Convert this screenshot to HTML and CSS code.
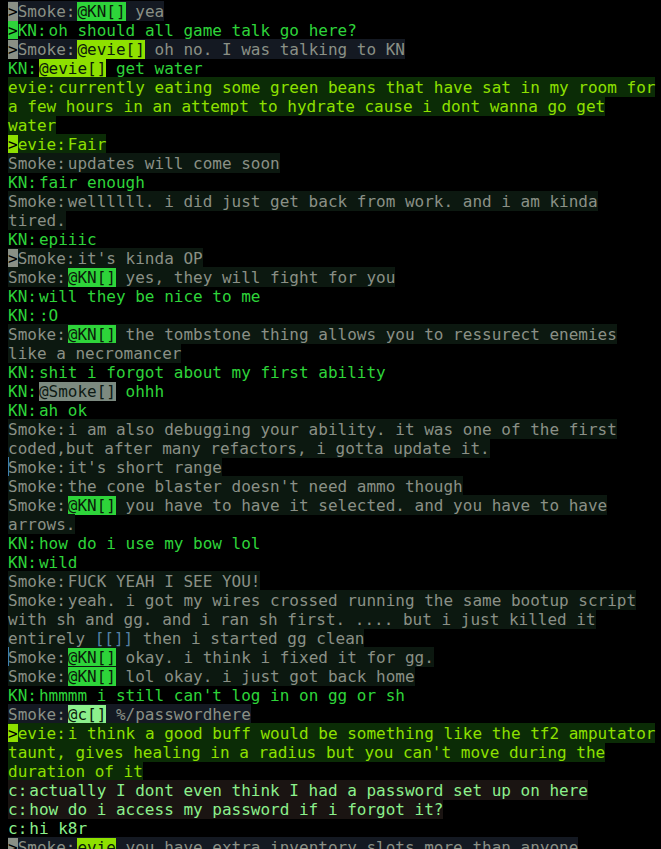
FILE: index.html
```html
<!DOCTYPE html>
<html>
<head>
<meta charset="utf-8">
<link rel="stylesheet" href="styles.css">
</head>
<body>
<div class="log">
  <div class="msg smoke self"><span class="b"><span class="p">&gt;</span><span class="n">Smoke:</span><span class="m kn">@KN[]</span> yea</span></div>
  <div class="msg kn self"><span class="b"><span class="p">&gt;</span><span class="n">KN:</span>oh should all game talk go here?</span></div>
  <div class="msg smoke self"><span class="b"><span class="p">&gt;</span><span class="n">Smoke:</span><span class="m ev">@evie[]</span> oh no. I was talking to KN</span></div>
  <div class="msg kn"><span class="b"><span class="n">KN:</span><span class="m ev">@evie[]</span> get water</span></div>
  <div class="msg evie"><span class="b"><span class="n">evie:</span>currently eating some green beans that have sat in my room for a few hours in an attempt to hydrate cause i dont wanna go get water</span></div>
  <div class="msg evie self"><span class="b"><span class="p">&gt;</span><span class="n">evie:</span>Fair</span></div>
  <div class="msg smoke"><span class="b"><span class="n">Smoke:</span>updates will come soon</span></div>
  <div class="msg kn"><span class="b"><span class="n">KN:</span>fair enough</span></div>
  <div class="msg smoke"><span class="b"><span class="n">Smoke:</span>wellllll. i did just get back from work. and i am kinda tired.</span></div>
  <div class="msg kn"><span class="b"><span class="n">KN:</span>epiiic</span></div>
  <div class="msg smoke"><span class="b"><span class="p">&gt;</span><span class="n">Smoke:</span>it's kinda OP</span></div>
  <div class="msg smoke"><span class="b"><span class="n">Smoke:</span><span class="m kn">@KN[]</span> yes, they will fight for you</span></div>
  <div class="msg kn"><span class="b"><span class="n">KN:</span>will they be nice to me</span></div>
  <div class="msg kn"><span class="b"><span class="n">KN:</span>:O</span></div>
  <div class="msg smoke"><span class="b"><span class="n">Smoke:</span><span class="m kn">@KN[]</span> the tombstone thing allows you to ressurect enemies like a necromancer</span></div>
  <div class="msg kn"><span class="b"><span class="n">KN:</span>shit i forgot about my first ability</span></div>
  <div class="msg kn"><span class="b"><span class="n">KN:</span><span class="m sm">@Smoke[]</span> ohhh</span></div>
  <div class="msg kn"><span class="b"><span class="n">KN:</span>ah ok</span></div>
  <div class="msg smoke"><span class="b"><span class="n">Smoke:</span>i am also debugging your ability. it was one of the first coded,but after many refactors, i gotta update it.</span></div>
  <div class="msg smoke"><span class="b mark"><span class="n">Smoke:</span>it's short range</span></div>
  <div class="msg smoke"><span class="b"><span class="n">Smoke:</span>the cone blaster doesn't need ammo though</span></div>
  <div class="msg smoke"><span class="b"><span class="n">Smoke:</span><span class="m kn">@KN[]</span> you have to have it selected. and you have to have arrows.</span></div>
  <div class="msg kn"><span class="b"><span class="n">KN:</span>how do i use my bow lol</span></div>
  <div class="msg kn"><span class="b"><span class="n">KN:</span>wild</span></div>
  <div class="msg smoke"><span class="b"><span class="n">Smoke:</span>FUCK YEAH I SEE YOU!</span></div>
  <div class="msg smoke"><span class="b"><span class="n">Smoke:</span>yeah. i got my wires crossed running the same bootup script with sh and gg. and i ran sh first. .... but i just killed it entirely <span class="code">[[]]</span> then i started gg clean</span></div>
  <div class="msg smoke"><span class="b mark"><span class="n">Smoke:</span><span class="m kn">@KN[]</span> okay. i think i fixed it for gg.</span></div>
  <div class="msg smoke"><span class="b"><span class="n">Smoke:</span><span class="m kn">@KN[]</span> lol okay. i just got back home</span></div>
  <div class="msg kn"><span class="b"><span class="n">KN:</span>hmmmm i still can't log in on gg or sh</span></div>
  <div class="msg smoke self"><span class="b"><span class="n">Smoke:</span><span class="m c">@c[]</span> %/passwordhere</span></div>
  <div class="msg evie"><span class="b"><span class="p">&gt;</span><span class="n">evie:</span>i think a good buff would be something like the tf2 amputator taunt, gives healing in a radius but you can't move during the duration of it</span></div>
  <div class="msg c"><span class="b"><span class="n">c:</span>actually I dont even think I had a password set up on here</span></div>
  <div class="msg c"><span class="b"><span class="n">c:</span>how do i access my password if i forgot it?</span></div>
  <div class="msg c plain"><span class="b"><span class="n">c:</span>hi k8r</span></div>
  <div class="msg smoke self"><span class="b"><span class="p">&gt;</span><span class="n">Smoke:</span><span class="m ev">evie</span> you have extra inventory slots more than anyone</span></div>
</div>
</body>
</html>
```
FILE: styles.css
```css
html, body {
  margin: 0;
  padding: 0;
  background: #000;
}
body {
  overflow: hidden;
  height: 849px;
}
.log {
  width: 650px;
  padding: 2px 0 0 8px;
  font-family: "DejaVu Sans Mono", "Liberation Mono", monospace;
  font-size: 16px;
  line-height: 19px;
}
.msg { white-space: normal; }
.b {
  padding: 1px 0 0;
}
.n { margin-right: 2px; }
.p { color: #000; }
.m { color: #0b1a0b; }
.m.kn { background: #2ed43a; }
.m.ev { background: #8ee000; }
.m.sm { background: #7c8a80; color: #0e1a14; }
.m.c { background: #8cf08c; }
.code { color: #5582a6; }
.mark { box-shadow: inset 1px 0 0 #3e7fb0; }

.smoke .b { color: #8a9086; background: #0c1810; }
.smoke.self .b { background: #141922; }
.smoke .p { background: #8a9086; }

.kn .b { color: #2ed43a; background: transparent; }
.kn .p { background: #2ed43a; }

.evie .b { color: #8ee000; background: #0b2c06; }
.evie .p { background: #8ee000; }

.c .b { color: #8cf08c; background: #1a1412; }
.c.plain .b { background: transparent; }
```
